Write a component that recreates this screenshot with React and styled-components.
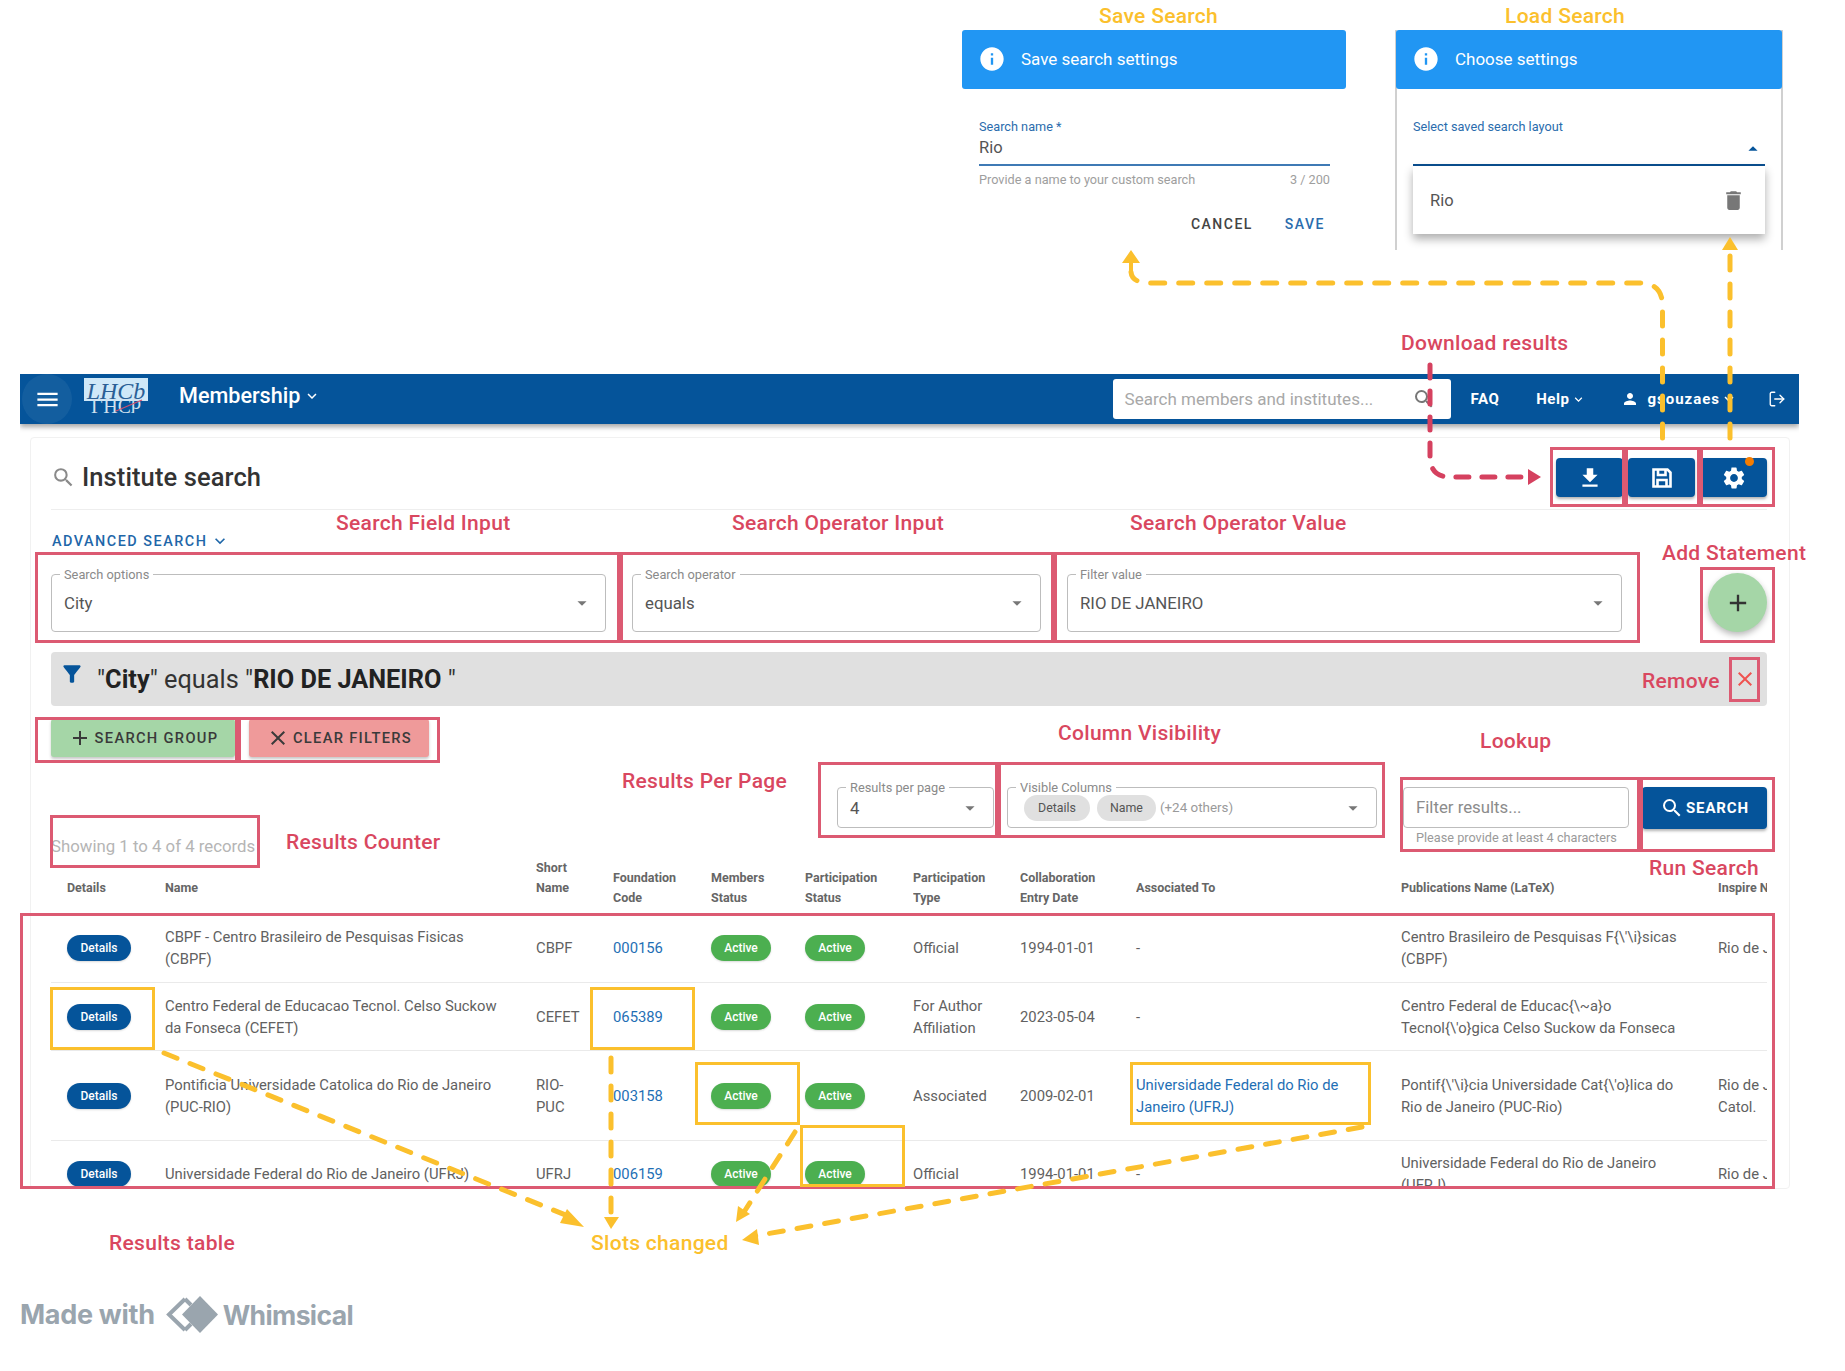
import React from "react";
import styled, { createGlobalStyle } from "styled-components";
import {
  MdInfo, MdFileDownload, MdSettings, MdDelete, MdFilterAlt, MdPerson,
  MdSearch, MdMenu, MdAdd, MdClose, MdExpandMore, MdArrowDropDown, MdArrowDropUp,
} from "react-icons/md";
import { LogOut } from "lucide-react";

const BLUE = "#05549a";
const PINK = "#d9475f";
const YELLOW = "#fbc02d";
const FONT = 'Roboto, "Liberation Sans", sans-serif';

const Global = createGlobalStyle`
  html, body { margin: 0; padding: 0; background: #fff; }
  body { font-family: ${FONT}; }
`;

const Canvas = styled.div`
  position: relative;
  width: 1845px;
  height: 1371px;
  overflow: hidden;
  background: #fff;
`;

/* ---------- canvas items ---------- */
const Placed = styled.div`
  position: absolute;
  left: ${(p) => p.$x}px;
  top: ${(p) => p.$y}px;
  width: ${(p) => p.$w}px;
  height: ${(p) => p.$h}px;
`;

const Dialog = styled(Placed)`
  display: flex;
  flex-direction: column;
  box-sizing: border-box;
  overflow: visible;
  ${(p) => p.$framed && "border-left: 2px solid #d0d0d0; border-right: 2px solid #d0d0d0;"}
`;

const DialogHead = styled.div`
  height: 59px;
  box-sizing: border-box;
  flex: none;
  margin: 0 ${(p) => (p.$framed ? -1 : 0)}px;
  background: #2196f3;
  border-radius: 3px;
  color: #fff;
  font-size: 17px;
  display: flex;
  align-items: center;
  gap: 15px;
  padding: 0 0 2px 16px;
  svg { font-size: 28px; flex: none; }
`;

const DialogBody = styled.div`
  flex: 1;
  padding: 30px 16px 0 ${(p) => p.$pl}px;
  display: flex;
  flex-direction: column;
`;

const FloatLabel = styled.div`
  font-size: 12.7px;
  line-height: 16px;
  color: #2a6cad;
`;

const DialogInput = styled.div`
  height: 31px;
  box-sizing: border-box;
  border-bottom: 2px solid ${(p) => p.$c};
  font-size: 16.5px;
  line-height: 24px;
  color: #555;
  padding-top: 1px;
  display: flex;
  justify-content: flex-end;
  svg { font-size: 22px; color: ${BLUE}; margin: 2px 1px 0 0; }
  span { margin-right: auto; }
`;

const HelperRow = styled.div`
  display: flex;
  justify-content: space-between;
  font-size: 12.7px;
  line-height: 16px;
  color: #9e9e9e;
  margin-top: 6px;
`;

const DialogActions = styled.div`
  display: flex;
  justify-content: flex-end;
  gap: 32px;
  margin-top: 27px;
  padding-right: 5px;
`;

const TextAction = styled.span`
  font-size: 14px;
  font-weight: 500;
  letter-spacing: 1.5px;
  line-height: 18px;
  color: ${(p) => p.$c};
`;

const Dropdown = styled.div`
  height: 68px;
  background: #fff;
  box-shadow: 0 5px 9px rgba(0, 0, 0, 0.32);
  display: flex;
  align-items: center;
  justify-content: space-between;
  padding: 0 19px 0 17px;
  font-size: 16.5px;
  color: #555;
  svg { font-size: 25px; color: #777; }
`;

/* ---------- app ---------- */
const App_ = styled(Placed)`
  isolation: isolate;
  overflow: hidden;
  display: flex;
  flex-direction: column;
`;

const NavBar = styled.header`
  height: 50px;
  flex: none;
  background: ${BLUE};
  box-shadow: 0 3px 5px rgba(0, 0, 0, 0.35);
  color: #fff;
  display: flex;
  align-items: center;
  position: relative;
  z-index: 2;
`;

const MenuCircle = styled.div`
  width: 50px;
  height: 50px;
  margin-left: 2px;
  border-radius: 50%;
  background: rgba(255, 255, 255, 0.06);
  display: flex;
  align-items: center;
  justify-content: center;
  font-size: 27px;
`;

const Logo = styled.svg`
  width: 64px;
  height: 42px;
  margin-left: 12px;
  flex: none;
`;

const AppName = styled.div`
  margin-left: 31px;
  font-size: 21.6px;
  font-weight: 500;
  margin-top: -7px;
  display: flex;
  align-items: center;
  gap: 3px;
  svg { font-size: 18px; }
`;

const NavSearch = styled.div`
  margin-left: auto;
  width: 338px;
  height: 40px;
  box-sizing: border-box;
  background: #fff;
  border-radius: 3px;
  padding: 0 15px 0 12px;
  display: flex;
  align-items: center;
  justify-content: space-between;
  font-size: 17px;
  color: #a8a8a8;
  svg { font-size: 24px; color: #777; }
`;

const NavItem = styled.div`
  margin-left: ${(p) => p.$ml}px;
  font-size: 15px;
  font-weight: 700;
  letter-spacing: ${(p) => p.$ls || 0.5}px;
  display: flex;
  align-items: center;
  gap: ${(p) => p.$gap || 2}px;
  svg { font-size: ${(p) => p.$icon || 15}px; }
`;

const TightChevron = styled(MdExpandMore)`
  margin-left: -8px;
`;

const Card = styled.main`
  margin: 13px 9px 0 10px;
  padding: 20px 22px 0 20px;
  border: 1px solid #f1f1f1;
  border-radius: 4px;
  display: flex;
  flex-direction: column;
  flex: 1;
  min-height: 0;
`;

const TitleRow = styled.div`
  display: flex;
  align-items: center;
  height: 39px;
  padding-bottom: 12px;
  border-bottom: 1px solid #eee;
  flex: none;
`;

const PageIcon = styled.span`
  font-size: 25px;
  color: #8a8a8a;
  display: flex;
  margin-right: 6px;
`;

const Title = styled.h1`
  margin: -2px 0 0;
  font-size: 25.5px;
  font-weight: 500;
  color: #333;
  letter-spacing: 0.1px;
`;

const ActionGroup = styled.div`
  margin-left: auto;
  display: flex;
  gap: 5px;
`;

const ActionButton = styled.div`
  position: relative;
  width: 67px;
  height: 39px;
  background: ${BLUE};
  border-radius: 4px;
  box-shadow: 0 2px 3px rgba(0, 0, 0, 0.3);
  color: #fff;
  display: flex;
  align-items: center;
  justify-content: center;
  font-size: 26px;
`;

const Floppy = styled.svg`
  width: 24px;
  height: 24px;
`;

const Badge = styled.span`
  position: absolute;
  top: -1px;
  right: 13px;
  width: 9px;
  height: 9px;
  border-radius: 50%;
  background: #f57c00;
`;

const AdvancedLink = styled.div`
  margin: 21px 0 0 1px;
  height: 20px;
  display: flex;
  align-items: center;
  gap: 3px;
  font-size: 14.4px;
  font-weight: 500;
  letter-spacing: 1.5px;
  color: #1f67a9;
  flex: none;
  svg { font-size: 20px; }
`;

const FieldRow = styled.div`
  display: flex;
  align-items: center;
  gap: 26px;
  margin-top: 22px;
  flex: none;
`;

const Field = styled.div`
  position: relative;
  box-sizing: border-box;
  width: ${(p) => p.$w}px;
  height: ${(p) => p.$h}px;
  flex: none;
  margin-left: ${(p) => p.$ml || 0}px;
  border: 1px solid #bdbdbd;
  border-radius: 4px;
  padding: 0 12px 0 ${(p) => p.$pl || 12}px;
  display: flex;
  align-items: center;
  gap: 7px;
  font-size: 16.8px;
  color: #555;
`;

const FieldLabel = styled.span`
  position: absolute;
  left: 8px;
  top: -8px;
  padding: 0 4px;
  background: #fff;
  font-size: 12.8px;
  line-height: 15px;
  color: #8a8a8a;
`;

const Caret = styled(MdArrowDropDown)`
  margin-left: auto;
  font-size: 22px;
  color: #777;
  flex: none;
`;

const Fab = styled.div`
  margin-left: auto;
  width: 59px;
  height: 59px;
  border-radius: 50%;
  background: #a5d6a7;
  box-shadow: 0 3px 6px rgba(0, 0, 0, 0.28);
  display: flex;
  align-items: center;
  justify-content: center;
  font-size: 28px;
  color: #333;
`;

const FilterBar = styled.div`
  margin-top: 20px;
  height: 54px;
  flex: none;
  background: #e0e0e0;
  border-radius: 4px;
  display: flex;
  align-items: center;
  font-size: 25.3px;
  color: #333;
  padding-left: 8px;
  b { font-weight: 700; color: #222; }
`;

const FilterIcon = styled.span`
  font-size: 26px;
  color: ${BLUE};
  display: flex;
  margin: -10px 12px 0 0;
`;

const RemoveIcon = styled.span`
  margin-left: auto;
  margin-right: 10px;
  font-size: 24px;
  color: #ef5350;
  display: flex;
`;

const ButtonRow = styled.div`
  display: flex;
  gap: 14px;
  margin-top: 13px;
  flex: none;
`;

const TintButton = styled.div`
  width: ${(p) => p.$w}px;
  height: 38px;
  border-radius: 3px;
  background: ${(p) => p.$bg};
  box-shadow: 0 2px 3px rgba(0, 0, 0, 0.22);
  display: flex;
  align-items: center;
  justify-content: center;
  gap: 3px;
  font-size: 14.7px;
  font-weight: 500;
  letter-spacing: 1.3px;
  color: #3a3a3a;
  svg { font-size: 24px; }
`;

const Toolbar = styled.div`
  display: flex;
  align-items: flex-end;
  margin-top: 30px;
  flex: none;
`;

const Counter = styled.div`
  font-size: 16.8px;
  line-height: 20px;
  color: #b5b5b5;
`;

const Controls = styled.div`
  margin-left: auto;
  display: flex;
  align-items: flex-start;
  padding-bottom: 8px;
`;

const Chip = styled.span`
  height: 26px;
  padding: 0 ${(p) => p.$pad}px;
  border-radius: 13px;
  background: #e0e0e0;
  font-size: 12.4px;
  color: #555;
  display: inline-flex;
  align-items: center;
`;

const Muted = styled.span`
  font-size: 13.4px;
  color: #9a9a9a;
  margin-left: -3px;
`;

const Lookup = styled.div`
  width: 226px;
  margin: 0 13px 0 26px;
  display: flex;
  flex-direction: column;
`;

const Placeholder = styled.span`
  color: #8c8c8c;
  margin-top: -2px;
`;

const Helper = styled.div`
  font-size: 12.7px;
  line-height: 16px;
  height: 18px;
  padding: 2px 0 0 13px;
  color: #9a9a9a;
  white-space: nowrap;
`;

const SearchButton = styled.div`
  width: 125px;
  height: 42px;
  background: ${BLUE};
  border-radius: 4px;
  box-shadow: 0 2px 3px rgba(0, 0, 0, 0.3);
  color: #fff;
  font-size: 15px;
  font-weight: 700;
  letter-spacing: 0.9px;
  display: flex;
  align-items: center;
  justify-content: center;
  gap: 2px;
  svg { font-size: 24px; }
`;

const Table = styled.div`
  overflow: hidden;
  flex: none;
`;

const COLS = "16px 98px 371px 77px 98px 94px 108px 107px 116px 265px 317px 50px";

const HeadRow = styled.div`
  display: grid;
  grid-template-columns: ${COLS};
  height: 58px;
  align-items: center;
  font-size: 12.5px;
  font-weight: 700;
  line-height: 20px;
  color: #666;
  border-bottom: 1px solid #eee;
  box-sizing: border-box;
  padding-top: 7px;
`;

const HeadCell = styled.div`
  ${(p) => p.$raise && "margin-bottom: 20px;"}
  white-space: ${(p) => (p.$clip ? "nowrap" : "pre-line")};
  overflow: hidden;
`;

const Row = styled.div`
  display: grid;
  grid-template-columns: ${COLS};
  height: ${(p) => p.$h}px;
  box-sizing: border-box;
  align-items: center;
  font-size: 14.8px;
  line-height: 22px;
  color: #616161;
  border-bottom: 1px solid #eaeaea;
`;

const Cell = styled.div`
  white-space: pre-line;
`;

const ClipCell = styled.div`
  white-space: pre;
  overflow: hidden;
`;

const LinkCell = styled.div`
  white-space: pre-line;
  color: #1f6fb5;
`;

const Pill = styled.span`
  display: inline-flex;
  align-items: center;
  justify-content: center;
  width: ${(p) => p.$w}px;
  height: 26px;
  border-radius: 13px;
  background: ${(p) => p.$bg};
  color: #fff;
  font-size: 12px;
  font-weight: 500;
  box-shadow: 0 1px 2px rgba(0, 0, 0, 0.15);
`;

/* ---------- annotations ---------- */
const Note = styled.div`
  position: absolute;
  left: ${(p) => p.$x}px;
  top: ${(p) => p.$y - 14}px;
  line-height: 28px;
  font-size: 21px;
  font-weight: 500;
  letter-spacing: 0.3px;
  white-space: nowrap;
  color: ${(p) => p.$c};
`;

const Frame = styled.div`
  position: absolute;
  box-sizing: border-box;
  left: ${(p) => p.$x1}px;
  top: ${(p) => p.$y1}px;
  width: ${(p) => p.$x2 - p.$x1}px;
  height: ${(p) => p.$y2 - p.$y1}px;
  border: 3px solid ${(p) => p.$c};
`;

const Overlay = styled.svg`
  position: absolute;
  left: 0;
  top: 0;
  width: 1845px;
  height: 1371px;
  pointer-events: none;
`;

const Brand = styled.div`
  position: absolute;
  left: 20px;
  top: 1296px;
  height: 37px;
  display: flex;
  align-items: center;
  gap: 10px;
  font-family: Inter, sans-serif;
  font-size: 27px;
  font-weight: 700;
  letter-spacing: -0.3px;
  color: #9aa5ae;
  svg { width: 53px; height: 37px; flex: none; }
`;

const BrandWord = styled.span`
  font-size: 26.5px;
  letter-spacing: -0.6px;
  margin-left: -5px;
`;

/* ---------- data ---------- */
const HEAD = ["", "Details", "Name", "Short\nName", "Foundation\nCode", "Members\nStatus", "Participation\nStatus",
  "Participation\nType", "Collaboration\nEntry Date", "Associated To", "Publications Name (LaTeX)", "Inspire Name"];

const ROWS = [
  { h: 69, name: "CBPF - Centro Brasileiro de Pesquisas Fisicas\n(CBPF)", short: "CBPF", code: "000156", type: "Official", date: "1994-01-01", assoc: "-", pub: "Centro Brasileiro de Pesquisas F{\\'\\i}sicas\n(CBPF)", inspire: "Rio de Janeiro" },
  { h: 68, name: "Centro Federal de Educacao Tecnol. Celso Suckow\nda Fonseca (CEFET)", short: "CEFET", code: "065389", type: "For Author\nAffiliation", date: "2023-05-04", assoc: "-", pub: "Centro Federal de Educac{\\~a}o\nTecnol{\\'o}gica Celso Suckow da Fonseca", inspire: "" },
  { h: 90, name: "Pontificia Universidade Catolica do Rio de Janeiro\n(PUC-RIO)", short: "RIO-\nPUC", code: "003158", type: "Associated", date: "2009-02-01", assoc: "Universidade Federal do Rio de\nJaneiro (UFRJ)", link: true, pub: "Pontif{\\'\\i}cia Universidade Cat{\\'o}lica do\nRio de Janeiro (PUC-Rio)", inspire: "Rio de Janeiro\nCatol." },
  { h: 67, name: "Universidade Federal do Rio de Janeiro (UFRJ)", short: "UFRJ", code: "006159", type: "Official", date: "1994-01-01", assoc: "-", pub: "Universidade Federal do Rio de Janeiro\n(UFRJ)", inspire: "Rio de Janeiro" },
];

const NOTES = [
  ["Save Search", 1099, 16, YELLOW], ["Load Search", 1505, 16, YELLOW], ["Download results", 1401, 343, PINK],
  ["Search Field Input", 336, 523, PINK], ["Search Operator Input", 732, 523, PINK], ["Search Operator Value", 1130, 523, PINK],
  ["Add Statement", 1662, 553, PINK], ["Remove", 1642, 681, PINK], ["Column Visibility", 1058, 733, PINK], ["Lookup", 1480, 741, PINK],
  ["Results Per Page", 622, 781, PINK], ["Results Counter", 286, 842, PINK], ["Run Search", 1649, 868, PINK],
  ["Results table", 109, 1243, PINK], ["Slots changed", 591, 1243, YELLOW],
];

const PINK_FRAMES = [
  [35, 552, 620, 643], [620, 552, 1054, 643], [1054, 552, 1640, 643], [1700, 567, 1775, 643], [1729, 657, 1760, 702],
  [1550, 447, 1625, 507], [1625, 447, 1700, 507], [1700, 447, 1775, 507], [35, 717, 238, 763], [238, 717, 440, 763],
  [818, 762, 998, 838], [998, 762, 1385, 838], [1400, 777, 1640, 852], [1640, 777, 1775, 852], [50, 815, 260, 868], [20, 913, 1775, 1189],
];

const YELLOW_FRAMES = [
  [50, 987, 155, 1050], [590, 987, 695, 1050], [695, 1062, 800, 1125], [800, 1125, 905, 1187], [1130, 1062, 1371, 1125],
];

const Info = () => <MdInfo />;

export default function App() {
  return (
    <Canvas>
      <Global />

      <Dialog $x={962} $y={30} $w={384} $h={220}>
        <DialogHead><Info />Save search settings</DialogHead>
        <DialogBody $pl={17}>
          <FloatLabel>Search name *</FloatLabel>
          <DialogInput $c="#3f7ab5"><span>Rio</span></DialogInput>
          <HelperRow><span>Provide a name to your custom search</span><span>3 / 200</span></HelperRow>
          <DialogActions>
            <TextAction $c="#444">CANCEL</TextAction>
            <TextAction $c="#2a6cad">SAVE</TextAction>
          </DialogActions>
        </DialogBody>
      </Dialog>

      <Dialog $x={1395} $y={30} $w={388} $h={220} $framed>
        <DialogHead $framed><Info />Choose settings</DialogHead>
        <DialogBody $pl={16}>
          <FloatLabel>Select saved search layout</FloatLabel>
          <DialogInput $c="#0a4f90"><MdArrowDropUp /></DialogInput>
          <Dropdown>Rio<MdDelete /></Dropdown>
        </DialogBody>
      </Dialog>

      <App_ $x={20} $y={374} $w={1779} $h={815}>
        <NavBar>
          <MenuCircle><MdMenu /></MenuCircle>
          <Logo viewBox="0 0 64 42">
            <rect x="0" y="0" width="64" height="23" fill="#cfe8f8" />
            <text x="32" y="21" textAnchor="middle" fontFamily="Liberation Serif" fontStyle="italic" fontSize="24" fill="#2a5f96">LHCb</text>
            <text x="32" y="23" transform="translate(0 44) scale(1 -1)" textAnchor="middle" fontFamily="Liberation Serif" fontSize="20" fill="#cfe0ee">LHCb</text>
            <path d="M32 33 L58 22" stroke="#d05070" strokeWidth="1.2" />
          </Logo>
          <AppName>Membership<MdExpandMore /></AppName>
          <NavSearch>Search members and institutes...<MdSearch /></NavSearch>
          <NavItem $ml={20}>FAQ</NavItem>
          <NavItem $ml={37}>Help<MdExpandMore /></NavItem>
          <NavItem $ml={35} $gap={8} $icon={18} $ls={1}><MdPerson />gsouzaes<TightChevron /></NavItem>
          <NavItem $ml={30} $icon={18}><LogOut size={18} strokeWidth={1.8} /></NavItem>
          <NavItem $ml={13} />
        </NavBar>

        <Card>
          <TitleRow>
            <PageIcon><MdSearch /></PageIcon>
            <Title>Institute search</Title>
            <ActionGroup>
              <ActionButton><MdFileDownload /></ActionButton>
              <ActionButton>
                <Floppy viewBox="0 0 24 24" fill="none" stroke="#fff" strokeWidth="2.6">
                  <path d="M3.5 3.5 H17.5 L20.5 6.5 V20.5 H3.5 Z" />
                  <path d="M8 3.5 V9 H15.5 V3.5" />
                  <path d="M7.5 20.5 V14 H16.5 V20.5" />
                </Floppy>
              </ActionButton>
              <ActionButton><MdSettings /><Badge /></ActionButton>
            </ActionGroup>
          </TitleRow>

          <AdvancedLink>ADVANCED SEARCH<MdExpandMore /></AdvancedLink>

          <FieldRow>
            <Field $w={555} $h={58}><FieldLabel>Search options</FieldLabel>City<Caret /></Field>
            <Field $w={409} $h={58}><FieldLabel>Search operator</FieldLabel>equals<Caret /></Field>
            <Field $w={555} $h={58}><FieldLabel>Filter value</FieldLabel>RIO DE JANEIRO<Caret /></Field>
            <Fab><MdAdd /></Fab>
          </FieldRow>

          <FilterBar>
            <FilterIcon><MdFilterAlt /></FilterIcon>
            <span>"<b>City</b>" equals "<b>RIO DE JANEIRO</b> "</span>
            <RemoveIcon><MdClose /></RemoveIcon>
          </FilterBar>

          <ButtonRow>
            <TintButton $w={184} $bg="#a5d6a7"><MdAdd />SEARCH GROUP</TintButton>
            <TintButton $w={180} $bg="#ef9a9a"><MdClose />CLEAR FILTERS</TintButton>
          </ButtonRow>

          <Toolbar>
            <Counter>Showing 1 to 4 of 4 records</Counter>
            <Controls>
              <Field $w={157} $h={41}><FieldLabel>Results per page</FieldLabel>4<Caret /></Field>
              <Field $w={370} $h={41} $ml={13} $pl={16}>
                <FieldLabel>Visible Columns</FieldLabel>
                <Chip $pad={14}>Details</Chip>
                <Chip $pad={13}>Name</Chip>
                <Muted>(+24 others)</Muted>
                <Caret />
              </Field>
              <Lookup>
                <Field $w={226} $h={41}><Placeholder>Filter results...</Placeholder></Field>
                <Helper>Please provide at least 4 characters</Helper>
              </Lookup>
              <SearchButton><MdSearch />SEARCH</SearchButton>
            </Controls>
          </Toolbar>

          <Table>
            <HeadRow>
              {HEAD.map((h, i) => (
                <HeadCell key={i} $raise={i === 3} $clip={i === 11}>{h}</HeadCell>
              ))}
            </HeadRow>
            {ROWS.map((r) => (
              <Row key={r.code} $h={r.h}>
                <span />
                <Cell><Pill $w={64} $bg={BLUE}>Details</Pill></Cell>
                <Cell>{r.name}</Cell>
                <Cell>{r.short}</Cell>
                <LinkCell>{r.code}</LinkCell>
                <Cell><Pill $w={60} $bg="#4caf50">Active</Pill></Cell>
                <Cell><Pill $w={60} $bg="#4caf50">Active</Pill></Cell>
                <Cell>{r.type}</Cell>
                <Cell>{r.date}</Cell>
                {r.link ? <LinkCell>{r.assoc}</LinkCell> : <Cell>{r.assoc}</Cell>}
                <Cell>{r.pub}</Cell>
                <ClipCell>{r.inspire}</ClipCell>
              </Row>
            ))}
          </Table>
        </Card>
      </App_>

      {PINK_FRAMES.map(([a, b, c, d]) => (
        <Frame key={`${a}-${b}`} $x1={a} $y1={b} $x2={c} $y2={d} $c="#dc5a72" />
      ))}
      {YELLOW_FRAMES.map(([a, b, c, d]) => (
        <Frame key={`${a}-${b}`} $x1={a} $y1={b} $x2={c} $y2={d} $c={YELLOW} />
      ))}

      <Overlay viewBox="0 0 1845 1371" fill="none">
        <g stroke={YELLOW} strokeWidth="5" strokeDasharray="14 14" strokeLinecap="round">
          <path d="M1662.5 438 L1662.5 305 Q1662 283 1640 283 L1150 283 Q1132 283 1131 272" />
          <path d="M1730 438 L1730 254" />
          <path d="M164 1053 L573 1218" />
          <path d="M611 1058 L611 1215" />
          <path d="M795 1132 L744 1212" />
          <path d="M1362 1127 L755 1236" />
        </g>
        <g fill={YELLOW}>
          <path d="M1122 263 L1131 250 L1140 263 Z M1129 262 H1133 V271 H1129 Z" />
          <path d="M1722 250 L1730 237 L1738 250 Z" />
          <path d="M567 1209 L584 1227 L560 1223 Z" />
          <path d="M604 1217 L619 1217 L611 1229 Z" />
          <path d="M738 1206 L750 1214 L736 1222 Z" />
          <path d="M757 1229 L759 1245 L742 1240 Z" />
        </g>
        <path d="M1430 365 L1430 458 Q1431 477 1450 477 L1528 477" stroke="#d5415f" strokeWidth="5" strokeDasharray="13 13" strokeLinecap="round" />
        <path d="M1528 469 L1541 477 L1528 485 Z" fill="#d5415f" />
      </Overlay>

      {NOTES.map(([t, x, y, c]) => (
        <Note key={t} $x={x} $y={y} $c={c}>{t}</Note>
      ))}

      <Brand>
        <span>Made with</span>
        <svg viewBox="0 0 53 37">
          <path d="M20 3 L4 18.5 L20 34" stroke="#9aa5ae" strokeWidth="4" fill="none" />
          <path d="M20 3 L26 9 M20 34 L26 28" stroke="#9aa5ae" strokeWidth="4" />
          <path d="M35 0 L53 18.5 L35 37 L17 18.5 Z" fill="#9aa5ae" />
        </svg>
        <BrandWord>Whimsical</BrandWord>
      </Brand>
    </Canvas>
  );
}
